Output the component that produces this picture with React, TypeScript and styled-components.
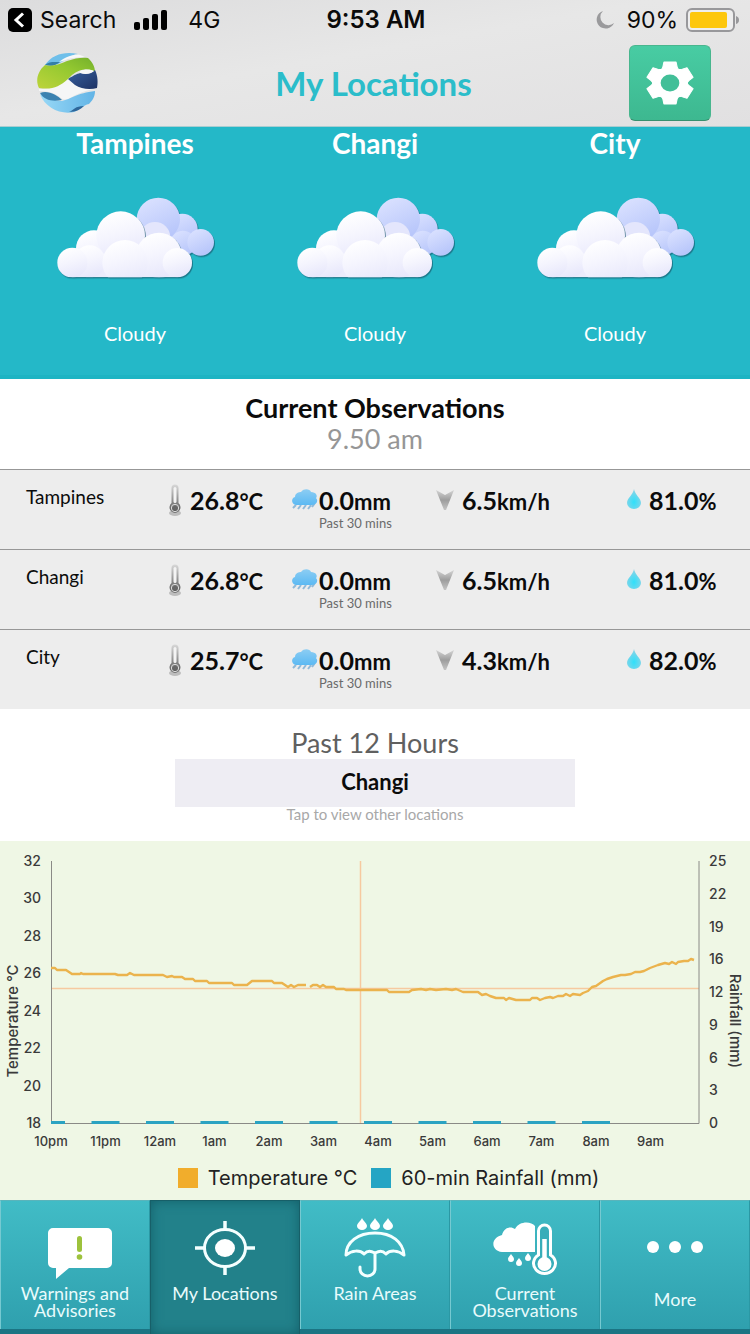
import React from "react";
import styled, { createGlobalStyle, css } from "styled-components";

const humanist = `Lato, "Open Sans", "Liberation Sans", sans-serif`;
const system = `Inter, "Liberation Sans", sans-serif`;

const GlobalStyle = createGlobalStyle`
  *, *::before, *::after { box-sizing: border-box; }
  body { margin: 0; background: #fff; font-family: ${humanist}; color: #0b0b0b; }
  button { border: 0; padding: 0; background: none; font: inherit; color: inherit; cursor: pointer; }
  h1, h2, p { margin: 0; font-weight: 400; }
  svg { display: block; flex: none; }
`;

const Page = styled.div`
  display: flex;
  flex-direction: column;
  min-height: 100vh;
`;

const TopBar = styled.header`
  background: linear-gradient(170deg, #dcdcdd, #e7e7e7 45%, #e1e0e1);
  border-bottom: 1px solid #a9cdd1;
`;

const StatusBar = styled.div`
  display: grid;
  grid-template-columns: 1fr auto 1fr;
  align-items: center;
  height: 40px;
  padding: 0 10px 0 8px;
  font-family: ${system};
  font-size: 23px;
  line-height: 28px;
`;

const StatusGroup = styled.div<{ $end?: boolean }>`
  display: flex;
  align-items: center;
  gap: 8px;
  justify-content: ${(p) => (p.$end ? "flex-end" : "flex-start")};
`;

const BackButton = styled.button`
  display: flex;
  align-items: center;
  gap: 8px;
`;

const Network = styled.span`
  padding-left: 6px;
`;

const Clock = styled.time`
  padding-left: 4px;
  font-size: 24px;
  font-weight: 600;
`;

const TitleBar = styled.div`
  display: grid;
  grid-template-columns: 1fr auto 1fr;
  align-items: center;
  height: 86px;
  padding: 0 39px 0 36px;
`;

const Title = styled.h1`
  color: #2bbdca;
  font-size: 33px;
  line-height: 38px;
  font-weight: 700;
`;

const SettingsButton = styled.button`
  justify-self: end;
  display: grid;
  place-items: center;
  width: 82px;
  height: 76px;
  border-radius: 6px;
  border: 1px solid #48b68e;
  border-bottom-color: #37906f;
  background: linear-gradient(#48cca3, #3db890);
`;

const Forecasts = styled.section`
  display: grid;
  grid-template-columns: repeat(3, 1fr);
  padding: 0 15px;
  height: 252px;
  background: #24b8c8;
  border-bottom: 4px solid #1db4c3;
  color: #fff;
`;

const Forecast = styled.article`
  display: flex;
  flex-direction: column;
  align-items: center;
`;

const Place = styled.h2`
  font-size: 28px;
  line-height: 32px;
  font-weight: 700;
  padding-bottom: 36px;
`;

const Condition = styled.p`
  font-size: 20px;
  line-height: 28px;
  padding-top: 36px;
`;

const Heading = styled.section`
  display: flex;
  flex-direction: column;
  align-items: center;
  height: 90px;
  padding-top: 13px;
`;

const HeadingTitle = styled.h2`
  font-size: 27px;
  line-height: 31px;
  font-weight: 700;
`;

const HeadingTime = styled.time`
  font-size: 27px;
  line-height: 31px;
  color: #969696;
`;

const Table = styled.table`
  width: 100%;
  table-layout: fixed;
  border-spacing: 0;
  background: #ededed;
`;

const Row = styled.tr`
  height: 80px;

  > * {
    border-top: 1px solid #979797;
  }
`;

const NameCell = styled.th`
  padding: 15px 0 0 26px;
  text-align: left;
  vertical-align: top;
  font-size: 19px;
  line-height: 24px;
  font-weight: 400;
`;

const DataCell = styled.td`
  padding: 13px 0 0;
  vertical-align: top;
`;

const Reading = styled.div<{ $icon: number }>`
  display: grid;
  grid-template-columns: ${(p) => p.$icon}px auto;
  justify-content: start;
  align-items: center;
`;

const Amount = styled.span`
  font-size: 25px;
  line-height: 34px;
  height: 34px;
  font-weight: 700;
  white-space: nowrap;
`;

const Unit = styled.span`
  font-size: 22px;
`;

const Note = styled.span`
  grid-column: 2;
  font-size: 13px;
  line-height: 12px;
  color: #6a6a6a;
`;

const History = styled.section`
  display: flex;
  flex-direction: column;
  align-items: center;
  height: 132px;
  padding-top: 18px;
`;

const HistoryTitle = styled.h2`
  font-size: 27px;
  line-height: 32px;
  color: #606060;
`;

const LocationButton = styled.button`
  width: 400px;
  max-width: 100%;
  height: 48px;
  padding-bottom: 4px;
  background: #eeedf3;
  font-size: 22px;
  font-weight: 700;
`;

const Hint = styled.p`
  font-size: 15px;
  line-height: 14px;
  color: #a8a8a8;
`;

const ChartPanel = styled.section`
  background: #eff7e5;
  flex: 1;
`;

const Chart = styled.svg`
  width: 100%;
  height: auto;
  font-family: ${system};
  font-size: 14px;
  font-weight: 500;
  fill: #3a3a3a;
`;

const Legend = styled.div`
  display: flex;
  justify-content: center;
  gap: 14px;
  padding: 9px 0 8px;
  margin-left: 27px;
  font-family: ${system};
  font-size: 20px;
  line-height: 28px;
  color: #222;
`;

const LegendItem = styled.span`
  display: flex;
  align-items: center;
  gap: 10px;
`;

const Swatch = styled.i<{ $color: string }>`
  width: 20px;
  height: 20px;
  background: ${(p) => p.$color};
`;

const TabBar = styled.nav`
  display: grid;
  grid-template-columns: repeat(5, 1fr);
  height: 134px;
  background: #1b7483;
`;

const Tab = styled.button<{ $active?: boolean }>`
  display: flex;
  flex-direction: column;
  align-items: center;
  justify-content: flex-start;
  padding-top: 15px;
  margin-bottom: 5px;
  color: #e9fbfc;
  font-size: 18px;
  line-height: 17px;
  border-left: 1px solid #76c9d1;
  border-right: 1px solid #2b98a4;
  border-top: 1px solid #5ab4bb;
  background: linear-gradient(#41bcc6, #2fa0ae);
  ${(p) =>
    p.$active &&
    css`
      margin-bottom: 0;
      border-color: #175f68;
      background: #22818a;
      box-shadow: inset 0 0 12px #14606b;
    `}
`;

const TabLabel = styled.span`
  padding-top: 5px;
  max-width: 130px;
`;

const Logo = () => (
  <svg width="62" height="62" viewBox="-1 0 62 62" role="img" aria-label="Logo">
    <defs>
      <linearGradient id="lg" x1="0" y1="1" x2="1" y2="0">
        <stop offset="0" stopColor="#bdd43b" />
        <stop offset=".6" stopColor="#93c830" />
        <stop offset="1" stopColor="#74b02c" />
      </linearGradient>
      <linearGradient id="ln" x1="0" y1="0" x2="1" y2="1">
        <stop offset="0" stopColor="#37619f" />
        <stop offset="1" stopColor="#1e3264" />
      </linearGradient>
      <linearGradient id="lb" x1="0" y1="0" x2="1" y2="0">
        <stop offset="0" stopColor="#98d8f6" />
        <stop offset="1" stopColor="#62b4e6" />
      </linearGradient>
    </defs>
    <path d="M2 37C18 38 25 29 32 26C38 33 46 38 59 37C48 38 40 42 33 46Q28 49 24 46C17 40 10 39 2 39Z" fill="#f5f6f6" />
    <path d="M8 13C15 2 29-1 41 2C32 3 29 8 21 12C16 14 12 13 8 13Z" fill="#6fbfea" />
    <path d="M8 13C12 9 18 10 23 10C17 15 12 14 8 13Z" fill="#347fa8" />
    <path d="M8 13C15 15 23 12 30 9C38 6 46 5 51 6C56 11 58 15 58 20C51 16 43 17 35 23L31 27C22 35 15 38 2 36C-2 28 1 19 8 13Z" fill="url(#lg)" />
    <path d="M22 10C29 4 38 2 43 3L48 5C40 5 32 6 26 9Z" fill="#f7f8f8" />
    <path d="M31 27C37 23 42 21 44 21C50 23 55 21 58 18C61 24 61 31 60 36C53 38 44 37 38 33Z" fill="url(#ln)" />
    <path d="M43 19C47 17 54 17 57 19C54 22 48 23 43 21Z" fill="#f7f8f8" />
    <path d="M3 42C10 46 18 49 25 49C34 47 40 41 58 39C58 45 55 49 52 52C46 53 43 58 37 60C24 63 8 56 3 42Z" fill="url(#lb)" />
    <path d="M3 41C11 38 20 43 25 48C15 50 7 48 3 41Z" fill="#3b82b0" />
    <path d="M32 60C37 58 38 54 47 54C44 57 39 60 32 60Z" fill="#2e6699" />
  </svg>
);

const Gear = () => (
  <svg width="50" height="44" viewBox="-25 -22 50 44" aria-hidden="true">
    <g transform="scale(1.1 1)" fill="#fff" stroke="#fff" strokeWidth="1" strokeLinejoin="round">
      <circle r="15" />
      {[0, 60, 120, 180, 240, 300].map((a) => (
        <path key={a} transform={`rotate(${a})`} d="M-5.500-21H5.500L6.500-16Q7-14 9-12.500H-9Q-7-14-6.500-16Z" />
      ))}
      <circle r="8.500" fill="#42bf98" stroke="none" />
    </g>
  </svg>
);

const SharedGradients = () => (
  <svg width="0" height="0" style={{ position: "absolute" }} aria-hidden="true">
    <defs>
      <linearGradient id="front" x1=".35" y1="0" x2=".65" y2="1">
        <stop offset="0" stopColor="#fff" />
        <stop offset=".45" stopColor="#f5f5fe" />
        <stop offset="1" stopColor="#e6e6fb" />
      </linearGradient>
      <linearGradient id="back" x1=".2" y1="0" x2=".7" y2="1">
        <stop offset="0" stopColor="#dbe2ff" />
        <stop offset="1" stopColor="#b5c4fa" />
      </linearGradient>
      <linearGradient id="tube" x1="0" y1="0" x2="0" y2="1">
        <stop offset="0" stopColor="#d9d9d9" />
        <stop offset="1" stopColor="#555" />
      </linearGradient>
      <linearGradient id="rain" x1="0" y1="0" x2="0" y2="1">
        <stop offset="0" stopColor="#8ccdf3" />
        <stop offset="1" stopColor="#5bb9f3" />
      </linearGradient>
      <linearGradient id="wind" x1="0" y1="0" x2="0" y2="1">
        <stop offset="0" stopColor="#d4d4d4" />
        <stop offset=".5" stopColor="#9d9d9d" />
        <stop offset="1" stopColor="#c4c4c4" />
      </linearGradient>
      <radialGradient id="drop" cx=".5" cy=".65" r=".6">
        <stop offset="0" stopColor="#2fe0fa" />
        <stop offset="1" stopColor="#8bd3e6" />
      </radialGradient>
    </defs>
  </svg>
);

const backPuffs = [[550, 147, 46], [478, 118, 65], [552, 190, 38], [605, 187, 40]];
const frontPuffs = [[285, 205, 54], [365, 167, 73], [480, 226, 68], [272, 244, 48], [220, 248, 45], [535, 248, 44], [378, 248, 68]];

const Cloud = () => (
  <svg width="164" height="88" viewBox="162 45 492 264" aria-hidden="true">
    <g style={{ filter: "drop-shadow(3px 4px 2px rgba(20,80,100,.6))" }}>
      {backPuffs.map(([x, y, r]) => (
        <circle key={x} cx={x} cy={y} r={r} fill="url(#back)" />
      ))}
      <circle cx="468" cy="172" r="46" fill="#e4e6fc" />
    </g>
    <g style={{ filter: "drop-shadow(3px 4px 2px rgba(20,80,100,.6))" }}>
      <clipPath id="base"><rect x="160" y="42" width="497" height="250" /></clipPath>
      <g clipPath="url(#base)">
        <rect x="220" y="220" width="318" height="72" fill="#ebebfb" />
        {frontPuffs.map(([x, y, r]) => (
          <circle key={x} cx={x} cy={y} r={r} fill="url(#front)" />
        ))}
      </g>
    </g>
  </svg>
);

const Thermometer = () => (
  <svg width="14" height="34" viewBox="0 0 14 34" aria-hidden="true">
    <ellipse cx="7" cy="30" rx="6" ry="3" fill="#bdbdbd" />
    <path d="M3.500 5a3.500 3.500 0 0 1 7 0V20a5.500 5.500 0 1 1-7 0Z" fill="url(#tube)" />
    <rect x="5.500" y="4" width="3" height="16" rx="1.500" fill="#f4f4f4" />
    <circle cx="7" cy="25" r="3.700" fill="none" stroke="#ddd" strokeWidth="1" />
    <circle cx="7" cy="25" r="2" fill="#666" />
  </svg>
);

const RainCloud = () => (
  <svg width="28" height="24" viewBox="0 0 28 24" aria-hidden="true">
    <path d="M5 17l-3 3M10 17l-3 4M15 17l-3 4M20 17l-3 4M24 15l-3 4" stroke="#8fb9d8" strokeWidth="2" />
    <path d="M5 17C0 16 0 10 4 9C4 5 8 4 10 4C13 0 19 1 20 4C25 4 27 8 25 10C28 13 25 17 21 17Z" fill="url(#rain)" />
  </svg>
);

const Wind = () => (
  <svg width="20" height="22" viewBox="0 0 20 22" aria-hidden="true">
    <path d="M1 1L10 6L19 1L11 21H9Z" fill="url(#wind)" />
  </svg>
);

const Drop = () => (
  <svg width="18" height="24" viewBox="0 0 18 24" aria-hidden="true">
    <path d="M9 1C10 7 16 10 16 15A7 6 0 0 1 2 15C2 10 8 7 9 1Z" fill="url(#drop)" />
  </svg>
);

const observations = [
  { name: "Tampines", temp: "26.8", rain: "0.0", wind: "6.5", humidity: "81.0" },
  { name: "Changi", temp: "26.8", rain: "0.0", wind: "6.5", humidity: "81.0" },
  { name: "City", temp: "25.7", rain: "0.0", wind: "4.3", humidity: "82.0" },
];

const hours = ["10pm", "11pm", "12am", "1am", "2am", "3am", "4am", "5am", "6am", "7am", "8am", "9am"];
const temperatures = [32, 30, 28, 26, 24, 22, 20, 18];
const rainfalls = [25, 22, 19, 16, 12, 9, 6, 3, 0];
const TOP = 20;
const BOTTOM = 282;

const HistoryChart = () => (
  <Chart viewBox="0 0 750 314" role="img" aria-label="Temperature and rainfall">
    {temperatures.map((t, i) => (
      <text key={t} x="41" y={25 + (i * (BOTTOM - TOP)) / 7} textAnchor="end">{t}</text>
    ))}
    {rainfalls.map((r, i) => (
      <text key={r} x="709" y={25 + (i * (BOTTOM - TOP)) / 8}>{r}</text>
    ))}
    {hours.map((h, i) => (
      <text key={h} x={51 + i * 54.5} y="305" textAnchor="middle" fontSize="13">{h}</text>
    ))}
    <text transform="translate(18 180) rotate(-90)" textAnchor="middle" fontSize="15">Temperature °C</text>
    <text transform="translate(730 180) rotate(90)" textAnchor="middle" fontSize="15">Rainfall (mm)</text>
    <path d="M51 147.500H699M360.500 20V282" stroke="#f6c9a0" fill="none" strokeWidth="1.500" />
    <path d="M51.500 20V282.500H699V20" stroke="#8a8a86" fill="none" />
    {hours.slice(0, 11).map((h, i) => (
      <rect key={h} x={i ? 37 + i * 54.5 : 51} y="280" width={i ? 28 : 14} height="3" fill="#2ba3c2" />
    ))}
    <path
      fill="none"
      stroke="#ebb34d"
      strokeWidth="2.400"
      strokeLinejoin="round"
      d="M51 127H55L57 129H66L69 131L72 133H80L81 132L83 133H115L118 134H127L130 132L134 134H163L167 136L172 135L174 136H182L185 138H193L195 140H207L209 142H232L234 144H247L252 140H272L274 142H282L285 144L288 146L291 144L294 146L298 144H306M310 146L313 144H317L320 146L323 144L326 146H334L336 148H344L346 149H360L363 149H387L389 151H409L412 149L421 148L426 149L430 148L436 149L446 148L452 149L456 148L463 151H478L482 154L486 153L490 155L496 157H504L506 159L509 157L516 159H530L532 157H537L540 159L545 157L550 156L553 157L558 155L563 155L566 153L570 155L573 153L580 154L583 152L588 150L592 146L596 145L603 140L607 138L613 136L621 134L625 134L631 133L635 131L640 131L644 130L650 127L658 124L665 122L669 123L672 121L676 123L678 121L684 120L688 120L691 118L694 119"
    />
  </Chart>
);

const WarningIcon = () => (
  <svg width="76" height="64" viewBox="-10 0 76 64" aria-hidden="true">
    <path d="M6 12H60a5 5 0 0 1 5 5V47a5 5 0 0 1-5 5H22L9 63V52H6a5 5 0 0 1-5-5V17a5 5 0 0 1 5-5Z" fill="#fff" />
    <rect x="30" y="20" width="5" height="16" rx="2.500" fill="#9dc23c" />
    <circle cx="32.500" cy="41" r="2.800" fill="#9dc23c" />
  </svg>
);

const TargetIcon = () => (
  <svg width="66" height="64" viewBox="0 0 66 64" aria-hidden="true">
    <ellipse cx="33" cy="32" rx="20.500" ry="18.500" fill="none" stroke="#f4ffff" strokeWidth="3" />
    <ellipse cx="33" cy="32" rx="10" ry="9" fill="#fff" />
    <path d="M3 32H13M53 32H63M33 5V14M33 50V59" stroke="#f4ffff" strokeWidth="3.500" />
  </svg>
);

const UmbrellaIcon = () => (
  <svg width="70" height="64" viewBox="0 0 70 64" fill="none" stroke="#f4ffff" strokeWidth="3" aria-hidden="true">
    {[22, 35, 48].map((x) => (
      <path key={x} d={`M${x} 2C${x + 1} 5 ${x + 5} 7 ${x + 5} 10A5 4 0 0 1 ${x - 5} 10C${x - 5} 7 ${x - 1} 5 ${x} 2Z`} fill="#fff" stroke="none" />
    ))}
    <path d="M6 39C6 26 18 17 35 17S63 26 64 39C58 34 50 34 46 38C42 34 39 35 35 37C31 35 28 34 24 38C20 34 12 34 6 39Z" strokeLinejoin="round" />
    <path d="M35 38V53A7.500 7 0 0 1 20 53V51" strokeLinecap="round" />
  </svg>
);

const ObservationIcon = () => (
  <svg width="70" height="64" viewBox="0 0 70 64" aria-hidden="true">
    <path d="M45 36H12C1 35 0 22 12 19C14 11 21 10 25 13C29 5 41 5 45 10Z" fill="#fff" />
    {[[21, 40], [29, 44], [38, 39]].map(([x, y]) => (
      <path key={x} d={`M${x} ${y - 2}C${x + 1} ${y} ${x + 3} ${y + 1} ${x + 3} ${y + 3}A3 3 0 0 1 ${x - 3} ${y + 3}C${x - 3} ${y + 1} ${x - 1} ${y} ${x} ${y - 2}Z`} fill="#fff" />
    ))}
    <path d="M48.500 15a6 6 0 0 1 12 0V39a11 10 0 1 1-12 0Z" fill="#38adb9" stroke="#fff" strokeWidth="3" />
    <circle cx="54.500" cy="48" r="7" fill="#fff" />
    <path d="M54.500 23V46" stroke="#fff" strokeWidth="4.500" />
  </svg>
);

const MoreIcon = () => (
  <svg width="66" height="70" viewBox="0 0 66 70" fill="#fff" aria-hidden="true">
    <circle cx="11" cy="31" r="6" />
    <circle cx="33" cy="31" r="6" />
    <circle cx="55" cy="31" r="6" />
  </svg>
);

const tabs = [
  { label: "Warnings and Advisories", Icon: WarningIcon },
  { label: "My Locations", Icon: TargetIcon },
  { label: "Rain Areas", Icon: UmbrellaIcon },
  { label: "Current Observations", Icon: ObservationIcon },
  { label: "More", Icon: MoreIcon },
];

export default function App() {
  return (
    <Page>
      <GlobalStyle />
      <SharedGradients />
      <TopBar>
        <StatusBar>
          <StatusGroup>
            <BackButton>
              <svg width="24" height="24" viewBox="0 0 24 24" aria-hidden="true">
                <rect width="24" height="24" rx="5" fill="#000" />
                <path d="M15 5.500L8 12l7 6.500" fill="none" stroke="#fff" strokeWidth="3" />
              </svg>
              Search
            </BackButton>
            <svg width="50" height="22" viewBox="-10 0 50 22" aria-hidden="true">
              <rect x="0" y="13" width="6" height="8" rx="2" />
              <rect x="9" y="9" width="6" height="12" rx="2" />
              <rect x="18" y="5" width="6" height="16" rx="2" />
              <rect x="27" y="1" width="6" height="20" rx="2" />
            </svg>
            <Network>4G</Network>
          </StatusGroup>
          <Clock>9:53 AM</Clock>
          <StatusGroup $end>
            <svg width="24" height="20" viewBox="0 0 24 20" aria-hidden="true">
              <path d="M8 1A8 8 0 0 0 19 13A9 9 0 1 1 8 1Z" fill="#9a9a9c" />
            </svg>
            <span>90%</span>
            <svg width="54" height="24" viewBox="0 0 54 24" aria-hidden="true">
              <rect x="1" y="1" width="47" height="22" rx="5" fill="#eee" stroke="#98989b" strokeWidth="2" />
              <rect x="4" y="4" width="37" height="16" rx="2" fill="#fdc70d" />
              <path d="M50 8Q53 9 53 12T50 16Z" fill="#98989b" />
            </svg>
          </StatusGroup>
        </StatusBar>
        <TitleBar>
          <Logo />
          <Title>My Locations</Title>
          <SettingsButton aria-label="Settings"><Gear /></SettingsButton>
        </TitleBar>
      </TopBar>

      <Forecasts>
        {["Tampines", "Changi", "City"].map((place) => (
          <Forecast key={place}>
            <Place>{place}</Place>
            <Cloud />
            <Condition>Cloudy</Condition>
          </Forecast>
        ))}
      </Forecasts>

      <Heading>
        <HeadingTitle>Current Observations</HeadingTitle>
        <HeadingTime>9.50 am</HeadingTime>
      </Heading>

      <Table>
        <colgroup>
          <col width="168" />
          <col width="123" />
          <col width="144" />
          <col width="190" />
          <col width="125" />
        </colgroup>
        <tbody>
          {observations.map((o) => (
            <Row key={o.name}>
              <NameCell scope="row">{o.name}</NameCell>
              <DataCell>
                <Reading $icon={22}>
                  <Thermometer />
                  <Amount>{o.temp}<Unit>°C</Unit></Amount>
                </Reading>
              </DataCell>
              <DataCell>
                <Reading $icon={28}>
                  <RainCloud />
                  <Amount>{o.rain}<Unit>mm</Unit></Amount>
                  <Note>Past 30 mins</Note>
                </Reading>
              </DataCell>
              <DataCell>
                <Reading $icon={27}>
                  <Wind />
                  <Amount>{o.wind}<Unit>km/h</Unit></Amount>
                </Reading>
              </DataCell>
              <DataCell>
                <Reading $icon={24}>
                  <Drop />
                  <Amount>{o.humidity}<Unit>%</Unit></Amount>
                </Reading>
              </DataCell>
            </Row>
          ))}
        </tbody>
      </Table>

      <History>
        <HistoryTitle>Past 12 Hours</HistoryTitle>
        <LocationButton>Changi</LocationButton>
        <Hint>Tap to view other locations</Hint>
      </History>

      <ChartPanel>
        <HistoryChart />
        <Legend>
          <LegendItem><Swatch $color="#f1ad2c" />Temperature °C</LegendItem>
          <LegendItem><Swatch $color="#25a5c4" />60-min Rainfall (mm)</LegendItem>
        </Legend>
      </ChartPanel>

      <TabBar>
        {tabs.map(({ label, Icon }) => (
          <Tab key={label} $active={label === "My Locations"}>
            <Icon />
            <TabLabel>{label}</TabLabel>
          </Tab>
        ))}
      </TabBar>
    </Page>
  );
}
